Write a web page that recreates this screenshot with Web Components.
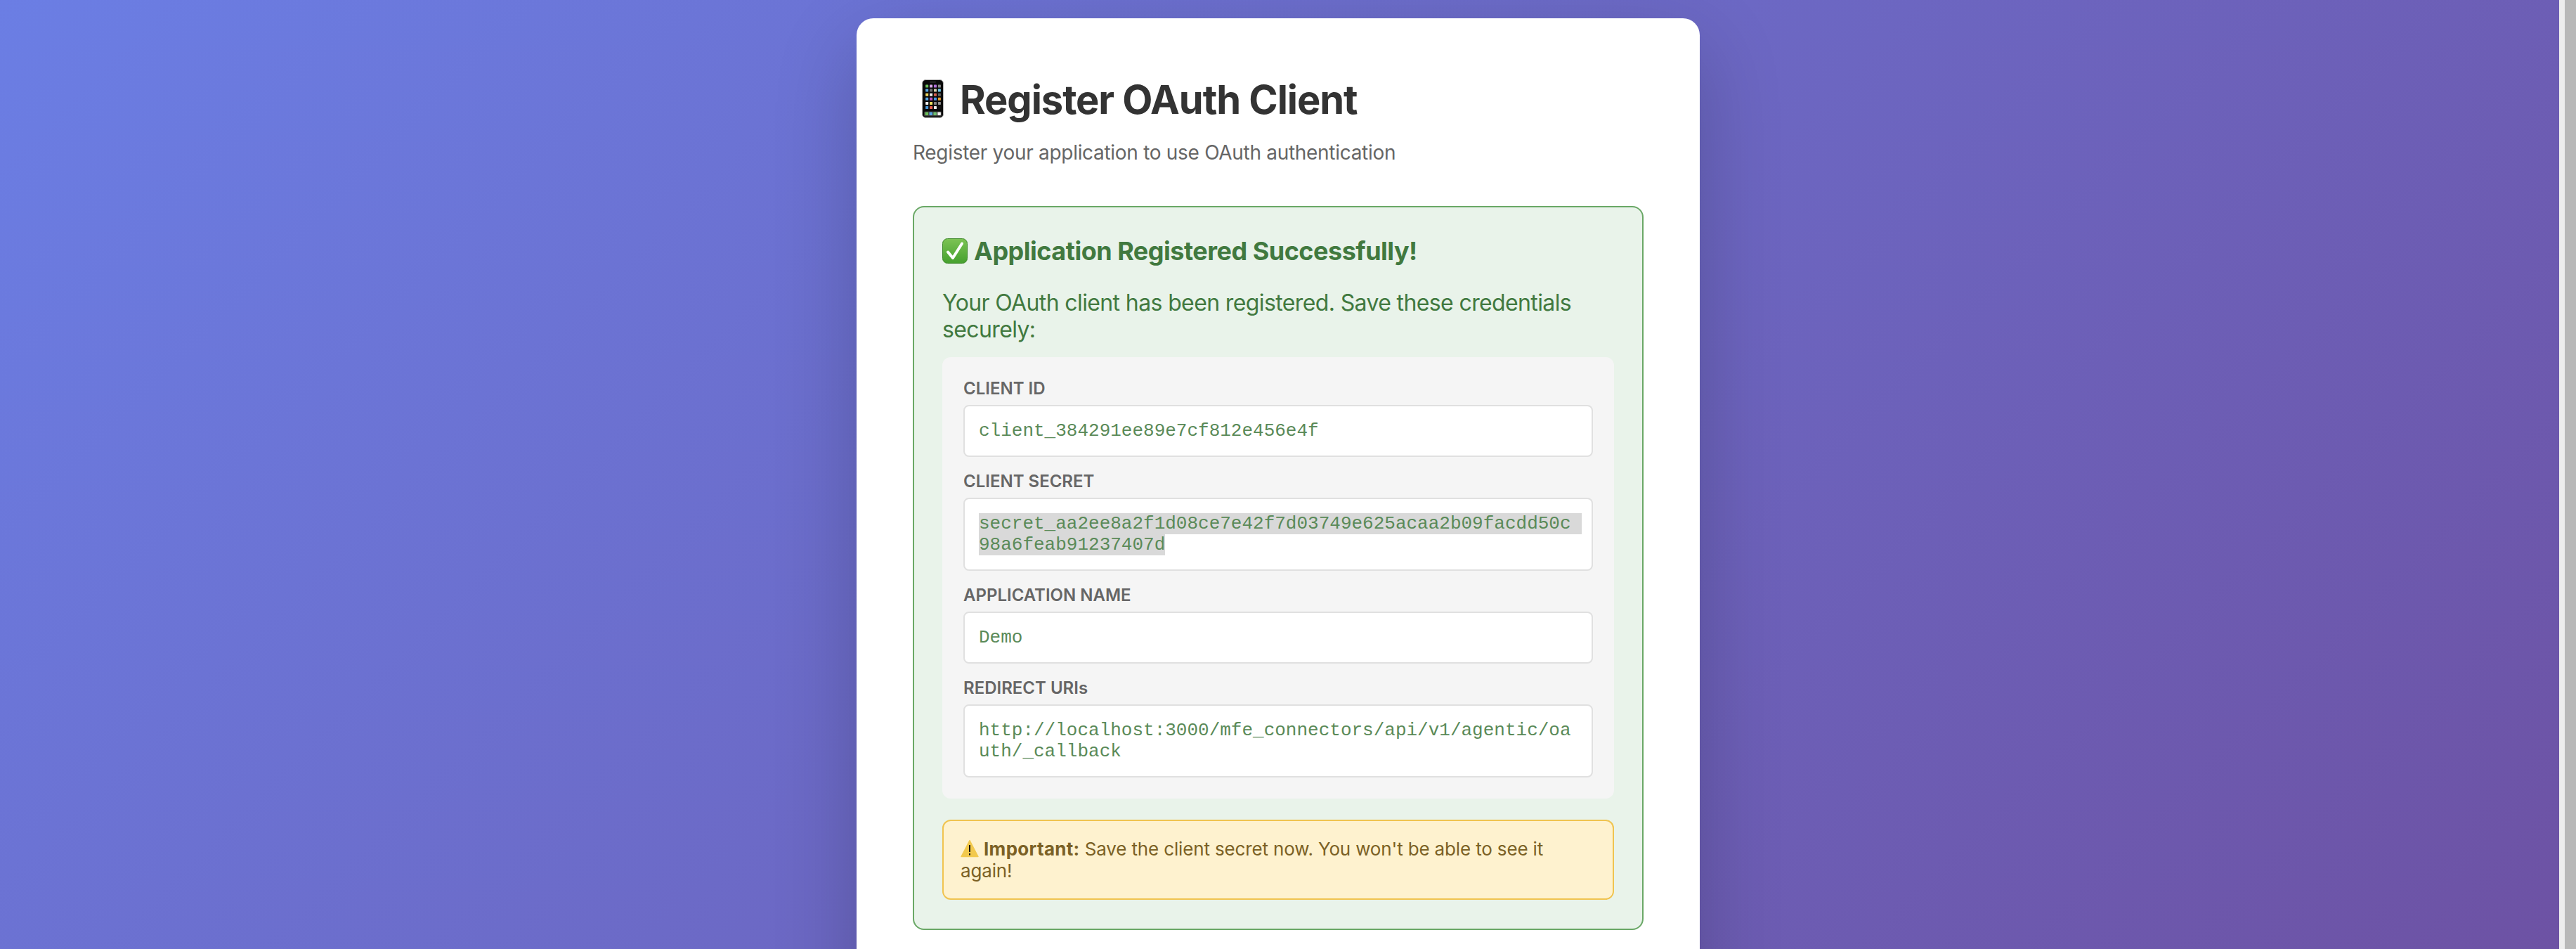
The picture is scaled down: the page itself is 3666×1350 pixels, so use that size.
<!DOCTYPE html>
<html lang="en">
<head>
<meta charset="utf-8">
<title>Register OAuth Client</title>
<style>
  html, body { margin: 0; height: 100%; overflow: hidden; }
  body { font-family: Inter, "Liberation Sans", sans-serif; }
</style>
</head>
<body>
<oauth-page>
  <oauth-card heading="Register OAuth Client" sub="Register your application to use OAuth authentication">
    <success-box heading="Application Registered Successfully!" text="Your OAuth client has been registered. Save these credentials securely:">
      <cred-list>
        <cred-field label="CLIENT ID">client_384291ee89e7cf812e456e4f</cred-field>
        <cred-field label="CLIENT SECRET" selected>secret_aa2ee8a2f1d08ce7e42f7d03749e625acaa2b09facdd50c98a6feab91237407d</cred-field>
        <cred-field label="APPLICATION NAME">Demo</cred-field>
        <cred-field label="REDIRECT URIs">http://localhost:3000/mfe_connectors/api/v1/agentic/oauth/_callback</cred-field>
      </cred-list>
      <warn-note><strong>Important:</strong> Save the client secret now. You won't be able to see it again!</warn-note>
    </success-box>
  </oauth-card>
</oauth-page>

<script>
/* ============================================================
   Page shell: gradient + fake scrollbar
   ============================================================ */
class OAuthPage extends HTMLElement{
  constructor(){
    super();
    this.attachShadow({mode:"open"});
    this.shadowRoot.innerHTML = `
      <style>
        :host{
          display: flex;
          height: 1350px;
          overflow: hidden;
        }
        .view{
          flex: 1;
          min-width: 0;
          box-sizing: border-box;
          padding: 26px 4px 0 0;
          background: linear-gradient(135deg, #6b7ee4 0%, #6d52a4 100%);
          display: flex;
          justify-content: center;
        }
        .bar{
          width: 24px;
          flex: none;
          display: flex;
          background: #ededed;
          justify-content: flex-end;
        }
        .thumb{ width: 16px; background: #b8b8b8; }
      </style>
      <div class="view"><slot></slot></div>
      <div class="bar"><div class="thumb"></div></div>
    `;
  }
}
customElements.define("oauth-page", OAuthPage);

/* white card with the title */
class OAuthCard extends HTMLElement{
  constructor(){
    super();
    this.attachShadow({mode:"open"});
    this.shadowRoot.innerHTML = `
      <style>
        :host{
          display: block;
          box-sizing: border-box;
          width: 1200px;
          height: 1500px;
          flex: none;
          padding: 82px 80px 80px;
          background: #fff;
          border-radius: 24px;
          box-shadow: 0 40px 120px rgba(0,0,0,.2);
        }
        h1{
          margin: 0 0 24px;
          font-size: 56px;
          font-weight: 700;
          letter-spacing: -1.05px;
          color: #333;
          display: flex;
          align-items: center;
        }
        svg{ width: 31px; height: 55px; margin: -3px 23px 0 13px; flex: none; }
        p{ margin: 0 0 59px; font-size: 28px; letter-spacing: -.3px; color: #666; }
      </style>
      <h1>
        <svg id="phone" viewBox="0 0 31 55" role="img" aria-label="mobile phone"></svg>
        <span id="h"></span>
      </h1>
      <p id="s"></p>
      <slot></slot>
    `;
    this.shadowRoot.getElementById("h").textContent = this.getAttribute("heading");
    this.shadowRoot.getElementById("s").textContent = this.getAttribute("sub");
    this.drawPhone();
  }
  // app grid of the phone emoji, colours read off the reference
  drawPhone(){
    const rows = [
      ["#6cc05a","#d8a8e8","#b070d8","#8a8a8a"],
      ["#58a8e8","#707070","#d8d0b0","#70c8e8"],
      ["#f0d860","#f0f0f0","#d86050","#606060"],
      ["#58a8e8","#c050c0","#4898e8","#e8a030"],
      ["#f0f0f0","#f0e060","#808080","#909090"],
      ["#4898d8","#e86050","#f0f0f0","#111111"]
    ];
    let out = `<rect x=".5" y=".5" width="30" height="54" rx="5" fill="#0a0a0a" stroke="#b4b4b4"/>
      <rect x="11" y="3" width="9" height="1.5" rx=".7" fill="#333"/>`;
    rows.forEach((r,y)=> r.forEach((c,x)=>{
      out += `<rect x="${5.2+x*5.9}" y="${7.5+y*6.1}" width="4" height="4" rx=".6" fill="${c}"/>`;
    }));
    out += `<rect x="3" y="45.5" width="25" height="7" rx="1.5" fill="#3c3c3c"/>`;
    ["#6cc05a","#58a8e8","#70c070","#f4f4f4"].forEach((c,x)=>{
      out += `<rect x="${4.6+x*5.9}" y="46.5" width="4.6" height="4.6" rx=".8" fill="${c}"/>`;
    });
    this.shadowRoot.getElementById("phone").innerHTML = out;
  }
}
customElements.define("oauth-card", OAuthCard);

class SuccessBox extends HTMLElement{
  constructor(){
    super();
    this.attachShadow({mode:"open"});
    this.shadowRoot.innerHTML = `
      <style>
        :host{
          display: block;
          padding: 40px;
          background: #e9f3ea;
          border: 2px solid #6aa866;
          border-radius: 16px;
          color: #41793f;
        }
        h2{
          margin: 0 0 33px;
          font-size: 36px;
          font-weight: 700;
          letter-spacing: -.5px;
          display: flex;
          align-items: center;
        }
        svg{ width: 36px; height: 36px; margin-right: 9px; flex: none; }
        p{ margin: 0 0 20px; font-size: 32px; line-height: 38px; letter-spacing: -.62px; }
      </style>
      <h2>
        <svg viewBox="0 0 36 36" role="img" aria-label="check mark">
          <defs><linearGradient id="g" x1="0" y1="0" x2="0" y2="1">
            <stop offset="0" stop-color="#7cc354"/><stop offset="1" stop-color="#45a02e"/>
          </linearGradient></defs>
          <rect x=".5" y=".5" width="35" height="35" rx="7" fill="url(#g)" stroke="#3f8a2c"/>
          <path d="M8 19.5 15 28 28 7.5" fill="none" stroke="#fff" stroke-width="4" stroke-linecap="round" stroke-linejoin="round"/>
        </svg>
        <span id="h"></span>
      </h2>
      <p id="t"></p>
      <slot></slot>
    `;
    this.shadowRoot.getElementById("h").textContent = this.getAttribute("heading");
    this.shadowRoot.getElementById("t").textContent = this.getAttribute("text");
  }
}
customElements.define("success-box", SuccessBox);

class CredList extends HTMLElement{
  constructor(){
    super();
    this.attachShadow({mode:"open"});
    this.shadowRoot.innerHTML = `
      <style>
        :host{
          display: flex;
          flex-direction: column;
          gap: 20px;
          padding: 30px;
          background: #f5f5f5;
          border-radius: 12px;
        }
      </style>
      <slot></slot>
    `;
  }
}
customElements.define("cred-list", CredList);

class CredField extends HTMLElement{
  constructor(){
    super();
    this.attachShadow({mode:"open"});
    this.shadowRoot.innerHTML = `
      <style>
        :host{ display: block; }
        label{
          display: block;
          margin-bottom: 9px;
          font-size: 24px;
          font-weight: 600;
          color: #666;
        }
        .value{
          position: relative;
          padding: 20px;
          background: #fff;
          border: 2px solid #e0e0e0;
          border-radius: 8px;
          font: 26px "Liberation Mono", monospace;
          color: #5a8a58;
          word-break: break-all;
        }
        :host([selected]) .sel{ background: #d9d9d9; }
        /* browser selection runs one cell past the wrapped first line */
        :host([selected]) .value::after{
          content: "";
          position: absolute;
          left: calc(20px + 54ch);
          top: 20px;
          width: 1ch;
          height: 30px;
          background: #d9d9d9;
        }
      </style>
      <label id="l"></label>
      <div class="value"><span class="sel"><slot></slot></span></div>
    `;
    this.shadowRoot.getElementById("l").textContent = this.getAttribute("label");
  }
}
customElements.define("cred-field", CredField);

class WarnNote extends HTMLElement{
  constructor(){
    super();
    this.attachShadow({mode:"open"});
    this.shadowRoot.innerHTML = `
      <style>
        :host{
          display: block;
          margin: 30px 0 1px;
          padding: 24px;
          background: #fef2cf;
          border: 2px solid #f0c450;
          border-radius: 12px;
          font-size: 26px;
          letter-spacing: -.15px;
          color: #7b6125;
        }
        svg{ width: 26px; height: 26px; margin-right: 7px; vertical-align: -3px; }
        ::slotted(strong){ font-weight: 700; letter-spacing: .3px; }
      </style>
      <svg viewBox="0 0 26 26" role="img" aria-label="warning">
        <path d="M13 1.5 25 24.5H1Z" fill="#f2c94e" stroke="#f2c94e" stroke-width="1.4" stroke-linejoin="round"/>
        <path d="M13 8v10" stroke="#111" stroke-width="2"/>
        <path d="M13 20v2.4" stroke="#111" stroke-width="2"/>
      </svg><slot></slot>
    `;
  }
}
customElements.define("warn-note", WarnNote);
</script>
</body>
</html>
